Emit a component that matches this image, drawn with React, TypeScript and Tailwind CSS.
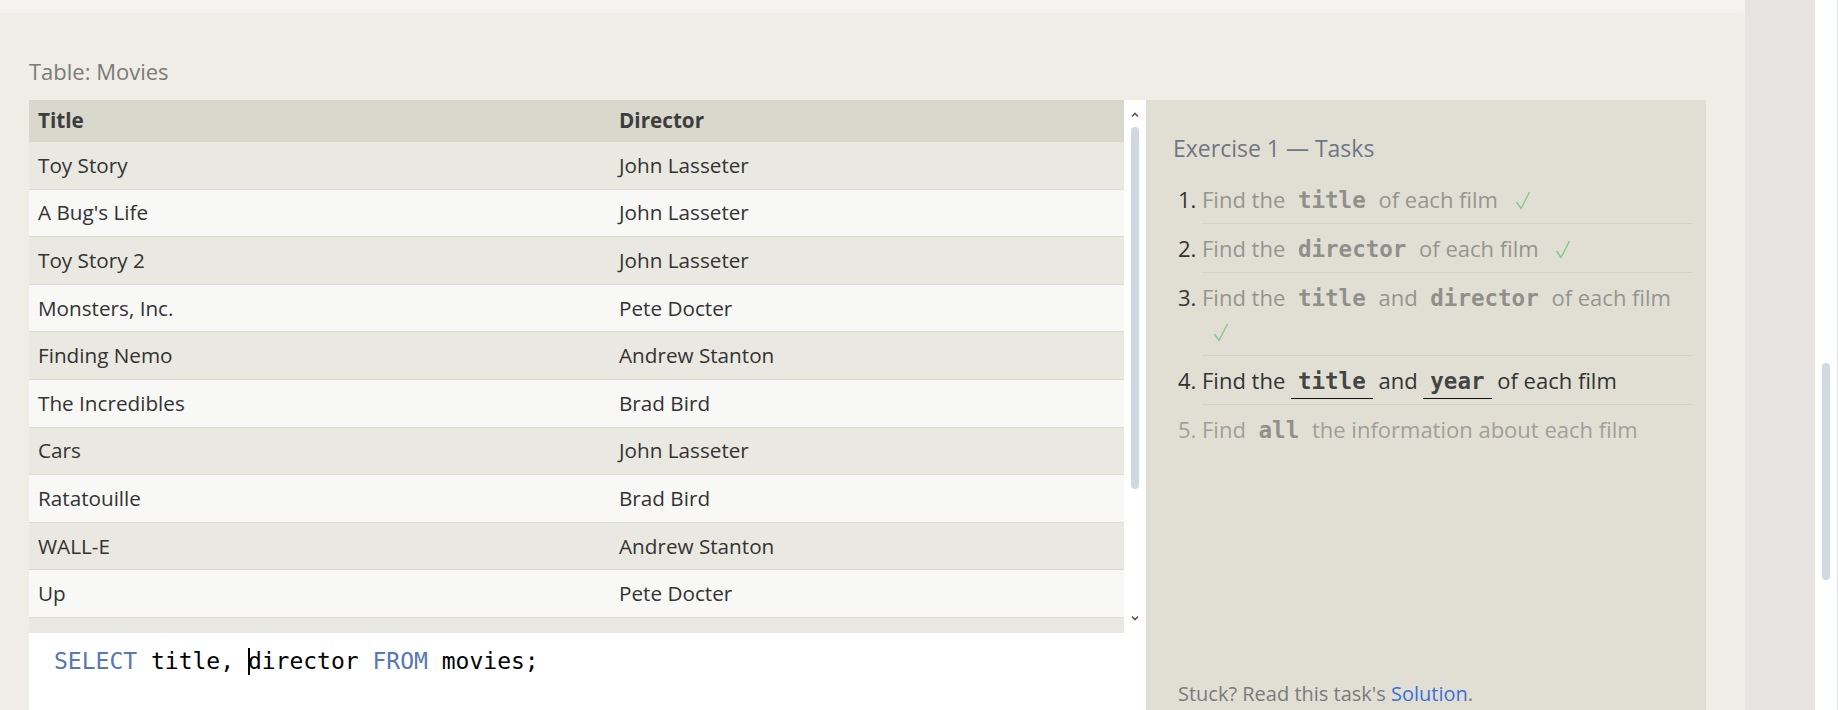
import React from "react";

type Movie = {
  title: string;
  director: string;
};

const movies: Movie[] = [
  { title: "Toy Story", director: "John Lasseter" },
  { title: "A Bug's Life", director: "John Lasseter" },
  { title: "Toy Story 2", director: "John Lasseter" },
  { title: "Monsters, Inc.", director: "Pete Docter" },
  { title: "Finding Nemo", director: "Andrew Stanton" },
  { title: "The Incredibles", director: "Brad Bird" },
  { title: "Cars", director: "John Lasseter" },
  { title: "Ratatouille", director: "Brad Bird" },
  { title: "WALL-E", director: "Andrew Stanton" },
  { title: "Up", director: "Pete Docter" },
  { title: "Toy Story 3", director: "Lee Unkrich" },
];

const sans = "font-['Open_Sans','Noto_Sans',sans-serif]";
const mono = "font-['DejaVu_Sans_Mono','Liberation_Mono',monospace]";

const Check = () => (
  <svg
    className="inline-block ml-[11px] align-[-2px]"
    width="16"
    height="19"
    viewBox="0 0 16 19"
    fill="none"
  >
    <polyline points="1.5,11 6,17.5 14.5,1" stroke="#7fca8f" strokeWidth="1.4" />
  </svg>
);

const Code = ({ children, current }: { children: React.ReactNode; current?: boolean }) => (
  <code
    className={
      mono +
      " font-bold text-[22.5px] leading-none px-[7px] " +
      (current ? "text-[#444] border-b border-[#111] pb-[4px]" : "text-[#8f8f8b]")
    }
  >
    {children}
  </code>
);

const Chevron = ({ down }: { down?: boolean }) => (
  <svg width="8" height="6" viewBox="0 0 8 6" fill="none">
    <polyline
      points={down ? "1,1.5 4,4.5 7,1.5" : "1,4.5 4,1.5 7,4.5"}
      stroke="#555"
      strokeWidth="1.6"
    />
  </svg>
);

export default function App() {
  return (
    <div className={"flex w-[1838px] h-[710px] overflow-hidden " + sans}>
      {/* main area */}
      <div className="flex flex-col w-[1745px] bg-[#f4f3ef]">
        <div className="h-[13px] shrink-0" />
        <div className="flex-1 bg-[#efede6] rounded-tr-[5px] pl-[29px] pt-[43px]">
          <div className="h-[30px] leading-[30px] text-[22px] text-[#7a7a7a] mb-[14px]">
            Table: Movies
          </div>
          <div className="flex">
            {/* left: table + editor */}
            <div className="flex flex-col w-[1117px] h-[610px]">
              <div className="flex h-[533px] shrink-0">
                <div className="w-[1095px] overflow-hidden text-[20.7px] text-[#333]">
                  <div className="flex h-[42px] items-center bg-[#d9d8cc] font-bold text-[#3d3d3d]">
                    <div className="w-[581px] pl-[9px]">Title</div>
                    <div className="pl-[9px]">Director</div>
                  </div>
                  {movies.map((m, i) => (
                    <div
                      key={m.title}
                      className={
                        "flex h-[47.6px] items-center border-b border-[#dcdbd5] " +
                        (i % 2 === 0 ? "bg-[#e9e8e1]" : "bg-[#f8f8f7]")
                      }
                    >
                      <div className="w-[581px] pl-[9px]">{m.title}</div>
                      <div className="pl-[9px]">{m.director}</div>
                    </div>
                  ))}
                </div>
                {/* table scrollbar */}
                <div className="flex flex-col items-center w-[22px] bg-white">
                  <div className="h-[27px] flex items-center justify-center pt-[2px]">
                    <Chevron />
                  </div>
                  <div className="w-[8px] h-[362px] rounded-[4px] bg-[#cfd9e2]" />
                  <div className="flex-1" />
                  <div className="h-[27px] flex items-center justify-center pb-[4px]">
                    <Chevron down />
                  </div>
                </div>
              </div>
              {/* editor */}
              <div className="flex-1 bg-white pl-[25px] pt-[13px]">
                <div className={mono + " text-[23px] leading-[30px] text-black whitespace-pre flex items-center"}>
                  <span className="text-[#5877b5]">SELECT</span>
                  <span> title, </span>
                  <span className="inline-block w-[2px] h-[27px] bg-black -mr-[2px]" />
                  <span>director </span>
                  <span className="text-[#5877b5]">FROM</span>
                  <span> movies;</span>
                </div>
              </div>
            </div>

            {/* right: tasks */}
            <div className="flex flex-col w-[560px] h-[610px] bg-[#e1dfd4] pl-[27px] pr-[13px] pt-[32px]">
              <h2 className="text-[23px] leading-[32px] text-[#6f7685]">Exercise 1 — Tasks</h2>
              <ol className="list-decimal list-outside pl-[29px] mt-[11px] text-[22px] text-[#333]">
                <li className="leading-[34px] py-[7px] border-b border-[#d5d3c8]">
                  <span className="text-[#959590]">
                    Find the <Code>title</Code> of each film <Check />
                  </span>
                </li>
                <li className="leading-[34px] py-[7px] border-b border-[#d5d3c8]">
                  <span className="text-[#959590]">
                    Find the <Code>director</Code> of each film <Check />
                  </span>
                </li>
                <li className="leading-[34px] py-[7px] border-b border-[#d5d3c8]">
                  <span className="text-[#959590]">
                    Find the <Code>title</Code> and <Code>director</Code> of each film <Check />
                  </span>
                </li>
                <li className="leading-[34px] py-[7px] border-b border-[#d5d3c8]">
                  Find the <Code current>title</Code> and <Code current>year</Code> of each film
                </li>
                <li className="leading-[34px] py-[7px] text-[#a09f9a]">
                  Find <Code>all</Code> the information about each film
                </li>
              </ol>
              <div className="flex-1" />
              <p className="text-[20px] leading-[28px] text-[#7a7a7a] pl-[5px] pb-[2px]">
                Stuck? Read this task's <a className="text-[#3a6fd8]">Solution</a>.
              </p>
            </div>
          </div>
        </div>
      </div>

      {/* side gutter */}
      <div className="w-[70px] bg-[#e8e4e1]" />

      {/* page scrollbar */}
      <div className="w-[23px] bg-white border-r border-[#dde4ea] pl-[7px] pt-[363px]">
        <div className="w-[8px] h-[217px] rounded-[4px] bg-[#d0dae3]" />
      </div>
    </div>
  );
}
